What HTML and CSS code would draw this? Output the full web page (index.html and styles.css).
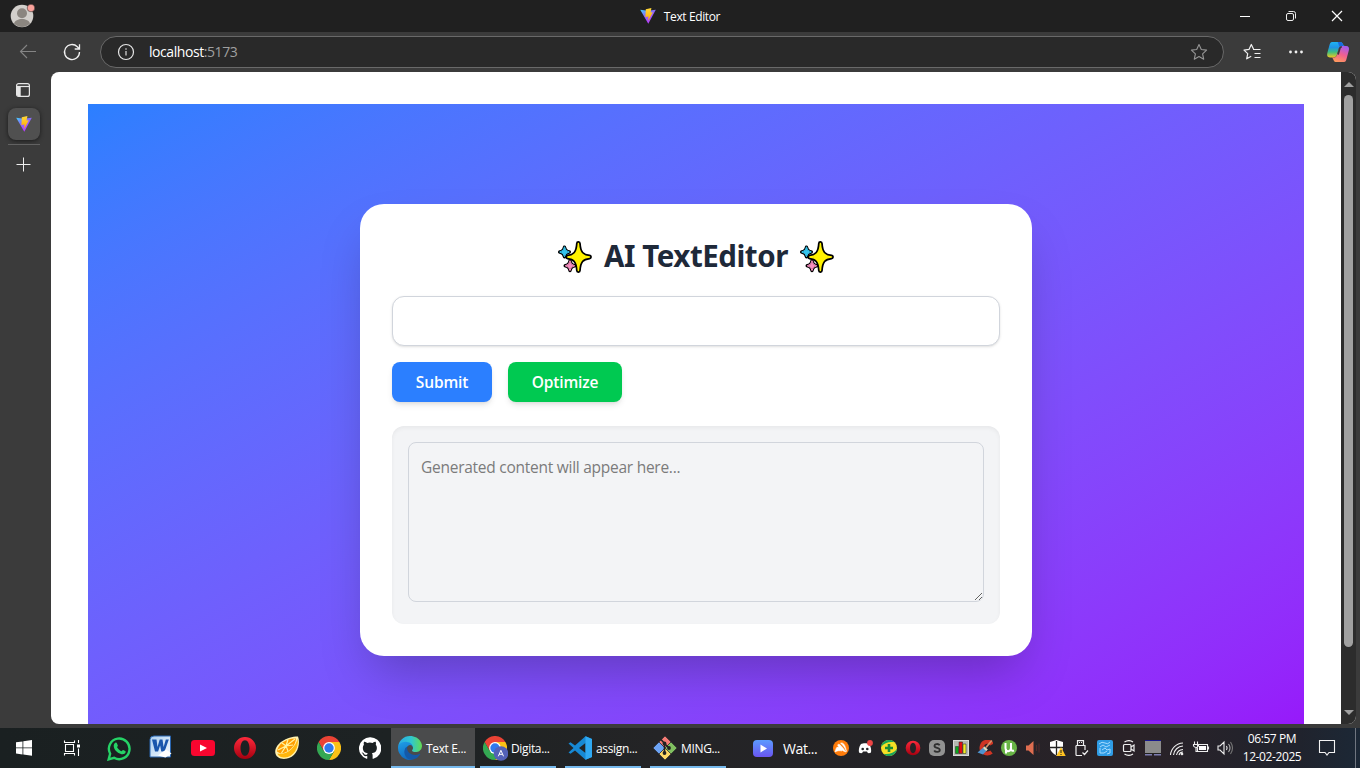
FILE: index.html
```
<!DOCTYPE html>
<html lang="en">
<head>
<meta charset="utf-8">
<title>Text Editor</title>
<link rel="stylesheet" href="styles.css">
</head>
<body>
<svg class="defs" width="0" height="0">
  <defs>
    <linearGradient id="viteBody" x1="0" y1="0" x2="0.6" y2="1"><stop offset="0" stop-color="#41d1ff"/><stop offset="0.45" stop-color="#8a6bfa"/><stop offset="1" stop-color="#bd34fe"/></linearGradient>
    <linearGradient id="viteBolt" x1="0" y1="0" x2="0" y2="1"><stop offset="0" stop-color="#ffd83a"/><stop offset="1" stop-color="#ffa800"/></linearGradient>
    <linearGradient id="operaRed" x1="0" y1="0" x2="0" y2="1"><stop offset="0" stop-color="#ff2a3c"/><stop offset="1" stop-color="#a5000f"/></linearGradient>
    <linearGradient id="edgeTop" x1="0" y1="0.4" x2="1" y2="0.4"><stop offset="0" stop-color="#2aa8e6"/><stop offset="0.55" stop-color="#2fc7d0"/><stop offset="1" stop-color="#62dc52"/></linearGradient>
    <linearGradient id="edgeMid" x1="0.2" y1="0" x2="0.5" y2="1"><stop offset="0" stop-color="#1f9fe8"/><stop offset="1" stop-color="#1168bd"/></linearGradient>
    <linearGradient id="copA" x1="0" y1="0" x2="0" y2="1"><stop offset="0" stop-color="#1fb4f4"/><stop offset="0.35" stop-color="#1f94e6"/><stop offset="0.65" stop-color="#3fbf80"/><stop offset="1" stop-color="#f2c81e"/></linearGradient>
    <linearGradient id="copB" x1="0.7" y1="0" x2="0.3" y2="1"><stop offset="0" stop-color="#a45cf0"/><stop offset="0.5" stop-color="#f0608f"/><stop offset="1" stop-color="#ff9a5c"/></linearGradient>
    <linearGradient id="play" x1="0" y1="0" x2="0" y2="1"><stop offset="0" stop-color="#5b9bff"/><stop offset="1" stop-color="#6a55f2"/></linearGradient>
    <linearGradient id="wordBg" x1="0" y1="0" x2="1" y2="1"><stop offset="0" stop-color="#a9cdf0"/><stop offset="1" stop-color="#f6fbff"/></linearGradient>
    <symbol id="vite" viewBox="0 0 16 16">
      <path d="M.2 1.8 8 2.800l7.800-1L8.300 15.800z" fill="url(#viteBody)"/>
      <path d="M5.800 1.200 11.400 0l-.8 4.600 2.200-.4L8.200 13l.2-4.500-3 .6z" fill="url(#viteBolt)"/>
    </symbol>
    <symbol id="sparkles" viewBox="0 0 34 32">
      <g stroke-linejoin="round" stroke-linecap="round">
        <path id="sparkBlue" d="M6.500 6.200q.6 4.200 4.800 4.800-4.200.6-4.800 4.800-.6-4.200-4.800-4.800 4.200-.6 4.800-4.800z" fill="#000" stroke="#000" stroke-width="3.400"/>
        <path d="M6.500 6.200q.6 4.200 4.800 4.800-4.200.6-4.800 4.800-.6-4.200-4.800-4.800 4.200-.6 4.800-4.800z" fill="#35c5ee" stroke="#35c5ee" stroke-width="1"/>
        <path d="M12 20q.6 4.200 4.800 4.800-4.200.6-4.800 4.800-.6-4.200-4.800-4.800 4.200-.6 4.800-4.800z" fill="#000" stroke="#000" stroke-width="3.400"/>
        <path d="M12 20q.6 4.200 4.800 4.800-4.200.6-4.800 4.800-.6-4.200-4.800-4.800 4.200-.6 4.800-4.800z" fill="#f78fc0" stroke="#f78fc0" stroke-width="1"/>
        <path d="M20.400 2.600C21 12 24 15.200 31.400 16 24 16.800 21 20 20.400 29.400 19.800 20 16.800 16.800 9.800 16 16.800 15.200 19.800 12 20.400 2.600z" fill="#000" stroke="#000" stroke-width="5"/>
        <path d="M20.400 2.600C21 12 24 15.200 31.400 16 24 16.800 21 20 20.400 29.400 19.800 20 16.800 16.800 9.800 16 16.800 15.200 19.800 12 20.400 2.600z" fill="#fff200" stroke="#fff200" stroke-width="1.500"/>
      </g>
    </symbol>
    <symbol id="opera" viewBox="0 0 24 24"><path fill="url(#operaRed)" fill-rule="evenodd" d="M12 1a11 11 0 1 1 0 22 11 11 0 0 1 0-22zm0 3.200c-2.700 0-4.500 3.500-4.500 7.800s1.800 7.800 4.500 7.800 4.500-3.500 4.500-7.800S14.700 4.200 12 4.200z"/></symbol>
    <symbol id="chrome" viewBox="0 0 24 24">
      <path d="M1.600 6A12 12 0 0 1 22.400 6L12 6.500 6.800 15z" fill="#ea4335"/>
      <path d="M22.400 6A12 12 0 0 1 12 24l5.200-9L12 6z" fill="#fbc116"/>
      <path d="M12 24A12 12 0 0 1 1.600 6l5.200 9 10.400 0z" fill="#34a853"/>
      <circle cx="12" cy="12" r="5.900" fill="#fff"/><circle cx="12" cy="12" r="4.700" fill="#2f79ee"/>
    </symbol>
  </defs>
</svg>
<div class="desktop">
  <header class="titlebar">
    <div class="profile">
      <svg width="28" height="28" viewBox="0 0 28 28"><circle cx="12" cy="14" r="11.300" fill="#d2cfcb"/><circle cx="12" cy="11.300" r="5" fill="#8b8680"/><path d="M4 21.500c1.500-6 14.500-6 16 0a11 11 0 0 1-16 0z" fill="#8b8680"/><circle cx="21" cy="6" r="3.800" fill="#f9a19a" stroke="#202020" stroke-width=".5"/></svg>
    </div>
    <div class="window-title"><svg width="16" height="16"><use href="#vite"/></svg><span>Text Editor</span></div>
    <div class="window-controls">
      <span><svg width="16" height="16"><path d="M3 8.500h10" stroke="#fff"/></svg></span>
      <span><svg width="16" height="16" fill="none" stroke="#eee"><rect x="3.500" y="5.500" width="7" height="7" rx="1.500"/><path d="M5.500 3.500h5a2 2 0 0 1 2 2v5"/></svg></span>
      <span><svg width="16" height="16"><path d="M3 3l10 10M13 3 3 13" stroke="#fff" stroke-width="1.200"/></svg></span>
    </div>
  </header>

  <div class="toolbar">
    <svg class="tool" width="20" height="20" fill="none" stroke="#858585" stroke-width="1.100"><path d="M18 9.500H2.500M9 3 2.500 9.500 9 16"/></svg>
    <svg class="tool" width="20" height="20" fill="none" stroke="#f0f0f0" stroke-width="1.300"><path d="M17.500 10a7.500 7.500 0 1 1-2.200-5.300L17.500 7M17.500 2.200V7h-4.800"/></svg>
    <div class="address">
      <svg width="18" height="18" fill="none" stroke="#e6e6e6" stroke-width="1.200"><circle cx="9" cy="9" r="7.500"/><path d="M9 8v4.500M9 5.200v1.500" stroke="#b9b9b9" stroke-width="1.500"/></svg>
      <span class="url">localhost<span class="port">:5173</span></span>
      <svg class="fav" width="18" height="18" fill="none" stroke="#969696" stroke-width="1.100" stroke-linejoin="round"><path d="M9 1.500l2.300 5 5.300.6-4 3.700 1.100 5.400L9 13.500l-4.700 2.700 1.100-5.400-4-3.700 5.300-.6z"/></svg>
    </div>
    <svg class="collections" width="20" height="20" fill="none" stroke="#f2f2f2" stroke-width="1.200" stroke-linejoin="round"><path d="M11.500 7 9.300 2.500 7 7.400l-5 .7 3.700 3.500-1 5.200 4.500-2.500M11 7.500h7.500M12.500 11.500h6M12.500 15.500h6"/></svg>
    <svg class="more" width="20" height="20" fill="#f2f2f2"><circle cx="4.500" cy="10" r="1.400"/><circle cx="10" cy="10" r="1.400"/><circle cx="15.500" cy="10" r="1.400"/></svg>
    <svg class="copilot" width="24" height="24" viewBox="0 0 24 24"><path d="M6 2h8.500c2.500 0 2.500 4 4.500 4h-3c-2.400 0-3 1.500-3.700 4L11 14.500c-.7 2.300-1.700 3-4 3H4c-2.700 0-3.300-2-2.600-4.700L3.500 5C4 3 4.800 2 6 2z" fill="url(#copA)"/><path d="M11.500 2h3c2.500 0 2.500 5 4.500 5h-4.500c-1.800 0-2.300-5-3-5z" fill="#1a6be0"/><path d="M18 22H9.500c-2.200 0-2-4.500-4-4.500H8c2 0 2.700-1.500 3.400-4l1.700-5.700C13.700 6.500 14.500 6 16.500 6H20c2.700 0 3.500 2 2.800 4.500l-2.300 8.500c-.5 1.800-1 3-2.500 3z" fill="url(#copB)"/><path d="M12 14.500 14 7.800C14.300 7 15 6.800 15.800 6.800" fill="none" stroke="#3b3b3b" stroke-width="1.800"/></svg>
  </div>

  <div class="workspace">
    <nav class="vertical-tabs">
      <svg class="tab-toggle" width="16" height="16" fill="none" stroke="#e6e6e6" stroke-width="1.200"><rect x="1.600" y="1.600" width="12.800" height="12.800" rx="2"/><path d="M2 4.500h12"/><path d="M2 4.500h3.300V14H3a1 1 0 0 1-1-1z" fill="#e6e6e6" stroke="none"/><path d="M5 4.500v9.500"/></svg>
      <div class="tab"><svg width="16" height="16"><use href="#vite"/></svg></div>
      <div class="tab-rule"></div>
      <svg width="16" height="16" stroke="#eee"><path d="M7.500.5v14M.5 7.500h14"/></svg>
    </nav>
    <div class="viewport">
      <main class="page">
        <section class="hero">
          <div class="card">
            <h1><svg class="emoji" width="34" height="32"><use href="#sparkles"/></svg><span>AI TextEditor</span><svg class="emoji" width="34" height="32"><use href="#sparkles"/></svg></h1>
            <input class="prompt" type="text">
            <div class="actions"><button class="submit">Submit</button><button class="optimize">Optimize</button></div>
            <div class="output"><textarea placeholder="Generated content will appear here..."></textarea></div>
          </div>
        </section>
      </main>
      <div class="scrollbar"><i class="up"></i><i class="thumb"></i><i class="down"></i></div>
    </div>
  </div>

  <footer class="taskbar">
    <div class="start"><svg width="16" height="16" fill="#fff"><path d="M0 2.300 6.500 1.400v6.100H0zM7.300 1.300 16 0v7.500H7.300zM0 8.300h6.500v6.100L0 13.500zM7.300 8.300H16v7.500l-8.700-1.200z"/></svg></div>
    <div class="start"><svg width="18" height="18" fill="none" stroke="#fff" stroke-width="1.100"><path d="M1.500 1.500v2h10v-2M1.500 16.500v-2h10v2M2.500 5.500h8v7h-8zM15.500 1v3M15.500 9.500V17"/><path d="M14 5.500h3v3h-3z" fill="#fff" stroke="none"/></svg></div>
    <div class="pins">
      <span><svg class="whatsapp" width="25" height="25" viewBox="0 0 24 24"><path d="M1.600 22.400 3 17a9.900 9.900 0 1 1 3.800 3.900z" fill="none" stroke="#25d366" stroke-width="2.300"/><path d="M8 6.500c.8-.4 1.300 0 1.600.7l.8 1.800c.2.600-.9 1.400-.7 1.800 1 1.800 2.300 3 4.100 3.800.5.200 1.200-1.300 1.700-1.100l2 1c.7.400.5 1.200 0 1.900-2.300 3-8.400-.6-10.300-4C6 9.800 6.200 7.500 8 6.500z" fill="#25d366"/></svg></span>
      <span><svg class="word" width="23" height="24" viewBox="0 0 23 24"><path d="M1 4.500Q1 1 5 1h16.500v21H1z" fill="url(#wordBg)" stroke="#2a66b0"/><path d="M3 4.500h4.500l1 7.500 2.200-7.500h2.800l1.100 7.500 2.200-7.500h3l-4.200 12h-3.300l-1.200-6-2 6H6z" fill="#1956ad"/><path d="M9 20.500l8-6 5.500 4-6 4z" fill="#fff"/></svg></span>
      <span><svg width="24" height="18"><rect y="1" width="24" height="16" rx="3.500" fill="#f9062f"/><path d="M9 5.500v7l7-3.500z" fill="#fff"/></svg></span>
      <span><svg width="24" height="24"><use href="#opera"/></svg></span>
      <span><svg width="26" height="26" viewBox="0 0 26 26"><path d="M1.200 17C1 9 12 1.500 24 1.500c3 7.500-1 21-12 22.300C6 24.500 1.500 22 1.200 17z" fill="#fff2b0"/><path d="M3 16.500C3.500 9 13 3 22 3.500 22 10 15 18 6.500 18.500z" fill="#ff9d00"/><path d="M3.500 18.500c8 2.500 18.500-6 20-15C25.500 13 19 22 11 22.500 7 22.500 4 21 3.500 18.500z" fill="#ffb60c"/><path d="M12 11 4 15M12 11 7.500 18M12 11l2 5M12 11l7-1M12 11 21 4M12 11l2-6.500M12 11 8 8" stroke="#fff4a0" stroke-width="1.200"/></svg></span>
      <span><svg width="24" height="24"><use href="#chrome"/></svg></span>
      <span><svg class="github" width="22" height="22" viewBox="0 0 16 16"><path fill="#fff" d="M8 .2a8 8 0 0 0-2.500 15.600c.4.100.5-.2.500-.4v-1.500c-2 .4-2.600-.5-2.800-1-.1-.2-.5-.9-.8-1.100-.3-.1-.7-.5 0-.5.600 0 1.100.6 1.200.8.700 1.200 1.900.9 2.300.7.100-.5.300-.9.500-1.100-1.800-.2-3.600-.9-3.600-3.900 0-.9.300-1.600.8-2.200-.1-.2-.4-1 .1-2.100 0 0 .7-.2 2.200.8a7.500 7.500 0 0 1 4 0c1.500-1 2.200-.8 2.200-.8.400 1.100.2 1.900.1 2.100.5.600.8 1.300.8 2.200 0 3.100-1.900 3.800-3.700 4 .3.200.6.700.6 1.500v2.200c0 .2.100.5.500.4A8 8 0 0 0 8 .2z"/></svg></span>
    </div>
    <div class="apps">
      <div class="app active"><svg width="24" height="24" viewBox="0 0 256 256"><path d="M231 190.500c-3.400 1.800-6.900 3.400-10.500 4.700a101.900 101.900 0 0 1-35.900 6.400c-47.300 0-88.500-32.500-88.500-74.300a31.500 31.500 0 0 1 16.400-27.300c-42.800 1.800-53.800 46.400-53.800 72.500 0 74 68.100 81.400 82.800 81.400 7.900 0 19.800-2.300 27-4.600l1.300-.4a128.300 128.300 0 0 0 66.600-52.800 4 4 0 0 0-5.400-5.600z" fill="#1459a8"/><path d="M105.700 241.400a79.200 79.200 0 0 1-22.700-21.300 80.700 80.700 0 0 1 29.500-120c3.200-1.500 8.500-4.100 15.600-4a32.400 32.400 0 0 1 25.700 13 31.900 31.900 0 0 1 6.300 18.700c0-.2 24.500-79.600-80-79.600-43.900 0-80 41.700-80 78.200a130.200 130.200 0 0 0 12.100 56 128 128 0 0 0 156.400 67 75.500 75.500 0 0 1-62.800-8z" fill="url(#edgeMid)"/><path d="M152.300 148.900c-.8 1-3.300 2.500-3.300 5.700 0 2.600 1.700 5.100 4.700 7.200 14.400 10 41.500 8.700 41.600 8.700a59.600 59.600 0 0 0 30.300-8.300 61.400 61.400 0 0 0 30.400-52.900c.3-22.400-8-37.300-11.300-43.900C223.500 23.900 177.700 0 128 0A128 128 0 0 0 0 126.200c.5-36.500 36.800-66 80-66 3.500 0 23.500.3 42 10 16.300 8.600 24.900 19 30.800 29.200 6.200 10.700 7.300 24.100 7.300 29.500 0 5.300-2.700 13.300-7.800 20z" fill="url(#edgeTop)"/></svg><span>Text E...</span></div>
      <div class="app"><svg width="25" height="26" viewBox="0 0 25 26"><use href="#chrome" y="1" width="24" height="24"/><circle cx="18" cy="18.500" r="7.300" fill="#5361b8"/><path d="m15.300 21.300 2.600-6 2.600 6m-4.300-2h3.300" fill="none" stroke="#fff" stroke-width="1"/></svg><span>Digita...</span></div>
      <div class="app"><svg width="24" height="24" viewBox="0 0 24 24"><path d="M17.500.3 24 3v18l-6.500 2.700L7 14.500l-4.500 3.300L.5 16.500 5.500 12 .5 7.500l2-1.300L7 9.500zM17.500 7 11 12l6.500 5z" fill="#1789d4" fill-rule="evenodd"/><path d="M17.500.3 24 3v18l-6.500 2.700z" fill="#2fa9f3"/></svg><span>assign...</span></div>
      <div class="app"><svg width="24" height="24" viewBox="0 0 24 24"><g stroke="#242426" stroke-width=".6"><path d="M12 0l6 6-6 6-6-6z" fill="#f47b75"/><path d="M18 6l6 6-6 6-6-6z" fill="#80bf60"/><path d="M12 12l6 6-6 6-6-6z" fill="#ffd966"/><path d="M6 6l6 6-6 6-6-6z" fill="#6da4f5"/></g><path d="M8 3.500l3.500 4L16 12M11.500 7v10" stroke="#222" stroke-width="1.600" fill="none"/><circle cx="11.500" cy="7.500" r="1.900" fill="#222"/><circle cx="16" cy="12" r="1.900" fill="#222"/><circle cx="11.500" cy="17" r="1.900" fill="#222"/></svg><span>MING...</span></div>
    </div>
    <div class="watch"><svg width="20" height="17"><rect width="20" height="17" rx="4" fill="url(#play)"/><path d="M7.500 4.500v8l6.500-4z" fill="#fff"/></svg><span>Wat...</span></div>
    <div class="tray">
      <span><svg width="16" height="16"><circle cx="8" cy="8" r="8" fill="#ff7c0a"/><path d="M2 12C3 9 3 7 5 7c2 0 3 2.500 4 4-2-.5-4.500-.5-7 1zM4.500 5C6 3 8 5 13 12 9 11 7 9 4.500 5zM7.500 3.200C10 1.800 12.500 5 13.500 11.500 12 8 10 5 7.500 3.200z" fill="#fff" stroke="#fff" stroke-width=".5"/></svg></span>
      <span><svg width="16" height="16"><path d="M4 4c2-1 6-1 8 0 2 2.500 2.500 6 2 8.500-1.500 1-3 1-3.500 0l-.5-1H6l-.5 1c-.5 1-2 1-3.500 0C1.500 10 2 6.500 4 4z" fill="#fff"/><circle cx="5.700" cy="9" r="1.300" fill="#252528"/><circle cx="10.300" cy="9" r="1.300" fill="#252528"/><circle cx="13" cy="3" r="2.900" fill="#ed4545"/></svg></span>
      <span><svg width="16" height="16"><circle cx="8" cy="8" r="8" fill="#f5df25"/><path d="M0 7a8 8 0 0 1 13.500-4.800C8 1.500 3 3 0 7zM16 9a8 8 0 0 1-13.500 4.800C8 14.500 13 13 16 9z" fill="#1aa35a"/><path d="M8 4v8M4 8h8" stroke="#198b36" stroke-width="2.600"/></svg></span>
      <span><svg width="16" height="16"><use href="#opera"/></svg></span>
      <span><svg width="16" height="16"><path d="M5 0h6a5 5 0 0 1 5 5v6a5 5 0 0 1-5 5H5a5 5 0 0 1-5-5V5a5 5 0 0 1 5-5z" fill="#929292"/><path d="M10.700 5.200C9.500 3.500 5.500 3.500 5.500 6c0 2.500 5.300 1.300 5.300 4 0 2.500-4.500 2.500-5.600.5" fill="none" stroke="#303030" stroke-width="1.800"/></svg></span>
      <span><svg width="16" height="16"><rect x=".5" y=".5" width="15" height="15" fill="#b5b8b0" stroke="#d8d8d8"/><path d="M2.500 6.500h3v7h-3z" fill="#09a819" stroke="#222" stroke-width=".5"/><path d="M6 2h3.500v11.500H6z" fill="#e00b14" stroke="#222" stroke-width=".5"/><path d="M10 4h3v9.500h-3z" fill="#f1ec27" stroke="#222" stroke-width=".5"/></svg></span>
      <span><svg width="16" height="16"><path d="M15 4.500C13 .5 6 .5 4.700 6.500S10 15.500 14.500 12" fill="none" stroke="#cf3524" stroke-width="4"/><path d="M14.800.5 9 7.500" stroke="#d9906a" stroke-width="1.800"/><path d="M7.500 6.500l3.200 3L6 14.500l-5.500-2z" fill="#4d94cf"/><path d="M7.500 6.500l3.200 3-1.500 1.500-3.200-3z" fill="#e6d9b0"/></svg></span>
      <span><svg width="16" height="16"><circle cx="8" cy="8" r="8" fill="#68b446"/><path d="M4.500 3v5c0 4.500 5.500 4 5.500 0V3m0 5c0 3 1.500 3 3 2.500M5 9v4.500" stroke="#fff" stroke-width="2" fill="none"/></svg></span>
      <span><svg width="16" height="16"><path d="M1 5.500h2.500L8.500 1v14l-5-4.500H1z" fill="#df6d50"/><path d="M11.500 5v6M14 3.500v9" stroke="#51282a" stroke-width="1.100"/></svg></span>
      <span><svg width="17" height="16"><path d="M7.500 0 14 2v5c0 4-3 6.500-6.500 8.500C4 13.500 1 11 1 7V2z" fill="#fff"/><path d="M7.500 1v14M1 7.500h13" stroke="#222" stroke-width="1.300"/><path d="M12 7l4.700 9H7.300z" fill="#ffc322"/><path d="M12 10v3M12 14v1" stroke="#222"/></svg></span>
      <span><svg width="16" height="16" fill="none" stroke="#eee" stroke-width="1.200"><path d="M4.500 5V.6h6V5M3 5.500h9V10M9 15.500H4a1 1 0 0 1-1-1v-9M9.500 12.500l2 2 3.500-4M6 2.500h1m1 0h1"/></svg></span>
      <span><svg width="16" height="16"><rect width="16" height="16" rx="2" fill="#2f9ce5"/><path d="M2 4q3-3 6-1t5-1M3 7l3-2 3 2 4-2M3 8v5h4M5 10l3-2 2 2 3-1v4l-3 1M7 13l3-2" fill="none" stroke="#a5daff"/></svg></span>
      <span><svg width="16" height="16" fill="none" stroke="#eee" stroke-width="1.200"><rect x="2.500" y="4.500" width="7.500" height="7" rx="1"/><path d="m10 7 3-2v6l-3-2M3.500 2Q8-.8 12 2M3.500 14Q8 16.800 12 14"/></svg></span>
      <span><svg width="18" height="16"><path d="M1 0h16v13H1z" fill="#8b8b8b"/><path d="M1 .5h16" stroke="#17178e"/><path d="M1 13.500h16" stroke="#222"/><path d="M1 14h7v1.500H1zM10 14h7v1.500h-7z" fill="#7d7db0"/></svg></span>
      <span><svg width="16" height="16" fill="none" stroke="#eee" stroke-width="1.100"><path d="M1.500 15A13 13 0 0 1 14 3M4.500 15A10 10 0 0 1 14 6M7.500 15A7 7 0 0 1 14 9.500M10 15a4 4 0 0 1 4-3"/><circle cx="13" cy="14" r=".8" fill="#eee"/></svg></span>
      <span><svg width="18" height="16" fill="none" stroke="#eee" stroke-width="1.100"><path d="M5.500 4.500h10v7h-10zM16.500 6.500v3M2.500 1.500v2.500m3-2.500v2.500M1.500 4.500h5v1.500Q4 9 1.500 6zM4 8v3.500h2"/><path d="M7 6h7v4H7z" fill="#fff" stroke="none"/></svg></span>
      <span><svg width="17" height="16" fill="none" stroke="#eee" stroke-width="1.100"><path d="M1 6h2l4-4v12l-4-4H1zM9.500 6q1.200 2 0 4"/><path d="M11.500 4q3 4 0 8" stroke="#b0b0b0"/><path d="M13.500 2q4 6 0 12" stroke="#777"/></svg></span>
    </div>
    <div class="clock"><span class="time">06:57 PM</span><span>12-02-2025</span></div>
    <div class="notice"><svg width="18" height="18"><path d="M1.500 1.500h15v12H11L9 16l-2-2.500H1.500z" fill="none" stroke="#f3f3f3" stroke-width="1.100"/></svg></div>
    <div class="peek"></div>
  </footer>
</div>
</body>
</html>
```
FILE: styles.css
```
* { box-sizing: border-box; }
body { margin: 0; overflow: hidden; font-family: "Open Sans", "Noto Sans", sans-serif; }
.defs { position: absolute; }
svg { display: block; flex: none; }
.desktop { width: 1360px; height: 768px; display: flex; flex-direction: column; background: #3b3b3b; overflow: hidden; }

.titlebar { height: 32px; flex: none; background: #202020; display: grid; grid-template-columns: 138px 1fr 138px; align-items: center; }
.profile { padding-left: 10px; }
.window-title { display: flex; justify-content: center; align-items: center; gap: 8px; color: #fff; font-size: 12px; letter-spacing: -0.38px; white-space: nowrap; }
.window-controls { display: grid; grid-template-columns: repeat(3, 46px); }
.window-controls span { display: flex; justify-content: center; }

.toolbar { height: 40px; flex: none; display: flex; align-items: center; padding: 0 10px 0 18px; }
.tool { margin-right: 24px; }
.tool + .tool { margin-right: 18px; }
.address { width: 1124px; height: 32px; border: 1px solid #696969; border-radius: 16px; background: #292929; display: flex; align-items: center; padding: 0 15px 0 16px; color: #fff; font-size: 14px; }
.url { margin: -1px 0 0 14px; letter-spacing: -0.43px; white-space: nowrap; }
.port { color: #a0a0a0; }
.fav { margin-left: auto; }
.collections { margin-left: 18px; }
.more { margin-left: 24px; }
.copilot { margin-left: 20px; }

.workspace { flex: 1; min-height: 0; display: flex; padding: 0 4px 4px 0; }
.vertical-tabs { width: 51px; padding: 10px 3px 0 0; display: flex; flex-direction: column; align-items: center; }
.tab-toggle { margin-right: 2px; }
.tab { width: 32px; height: 32px; margin-top: 10px; border-radius: 8px; background: #505050; box-shadow: 0 1px 4px #1b1b1b; display: flex; align-items: center; justify-content: center; }
.tab-rule { width: 32px; height: 1px; background: #626262; margin: 4px 0 12px; }
.viewport { flex: 1; display: flex; border-radius: 8px; overflow: hidden; background: #fff; }
.page { flex: 1; padding: 32px 37px 0; overflow: hidden; }
.hero { height: 652px; background: linear-gradient(to bottom right in oklab, #2b7fff, #9810fa); display: flex; align-items: center; justify-content: center; }
.card { width: 672px; padding: 32px; border-radius: 24px; background: #fff; box-shadow: 0 25px 50px -12px rgb(0 0 0 / 0.25); }
h1 { margin: 0 0 24px; height: 36px; padding-top: 3px; display: flex; align-items: center; justify-content: center; gap: 12px; color: #1e2939; font: 700 29.5px/36px "Noto Sans", "Open Sans", sans-serif; letter-spacing: -0.46px; white-space: nowrap; }
.emoji { margin-top: 2px; }
.prompt { display: block; width: 100%; height: 50px; border: 1px solid #d1d5dc; border-radius: 12px; padding: 12px; font: inherit; box-shadow: 0 1px 3px rgb(0 0 0 / 0.1), 0 1px 2px -1px rgb(0 0 0 / 0.1); }
.actions { display: flex; gap: 16px; margin: 16px 0 24px; }
.actions button { height: 40px; border: 0; border-radius: 8px; padding: 0; color: #fff; font: 600 15.5px/24px "Open Sans", sans-serif; letter-spacing: -0.15px; box-shadow: 0 4px 6px -1px rgb(0 0 0 / 0.1), 0 2px 4px -2px rgb(0 0 0 / 0.1); }
.submit { width: 100px; background: #2b7fff; }
.optimize { width: 114px; background: #00c951; }
.output { height: 198px; padding: 16px; border-radius: 12px; background: #f3f4f6; box-shadow: inset 0 2px 4px rgb(0 0 0 / 0.05); }
textarea { display: block; width: 100%; height: 160px; padding: 12px; border: 1px solid #d1d5dc; border-radius: 8px; background: transparent; font: 15.5px/24px "Open Sans", sans-serif; letter-spacing: -0.26px; resize: both; }
textarea::placeholder { color: #7b7b7b; }
.scrollbar { width: 15px; background: #2c2c2c; display: flex; flex-direction: column; align-items: center; padding: 10px 0 9px; }
.scrollbar i { display: block; }
.up, .down { border: 5px solid transparent; }
.up { border-top: 0; border-bottom-color: #a0a0a0; }
.down { margin-top: auto; border-bottom: 0; border-top-color: #a0a0a0; }
.thumb { width: 9px; height: 552px; margin-top: 8px; border-radius: 5px; background: #a0a0a0; }

.taskbar { height: 40px; flex: none; display: flex; align-items: stretch; background: linear-gradient(90deg, #1a2021 0, #1d2223 390px, #242426 660px, #242327 920px, #2a2228 1140px, #20232d 1300px, #1c2836); color: #fff; font-size: 12px; white-space: nowrap; }
.start { width: 48px; display: flex; align-items: center; justify-content: center; }
.pins { width: 293px; margin-left: 2px; display: grid; grid-template-columns: repeat(7, 42px); }
.pins span, .tray span { display: flex; align-items: center; justify-content: center; }
.word, .github { margin-right: 2px; }
.word { margin-bottom: 2px; }
.apps { display: flex; }
.app { width: 76px; margin-left: 9px; padding: 2px 0 0 3px; border-bottom: 2px solid #76b9ed; display: flex; align-items: center; gap: 4px; letter-spacing: -0.35px; }
.app:nth-child(2) { gap: 3px; }
.app.active { width: 84px; margin: 0 -4px 0 0; padding-left: 7px; background: #4a4b4c; }
.watch { width: 79px; margin-left: 27px; display: flex; align-items: center; gap: 10px; font-size: 14px; letter-spacing: -0.4px; }
.tray { width: 407px; margin-left: -3px; display: grid; grid-template-columns: repeat(17, 24px); }
.clock { width: 72px; display: flex; flex-direction: column; align-items: center; padding-top: 2px; line-height: 18px; letter-spacing: -0.4px; }
.notice { width: 38px; display: flex; align-items: center; justify-content: center; }
.peek { margin-left: auto; width: 5px; border-left: 1px solid #707680; }
```
